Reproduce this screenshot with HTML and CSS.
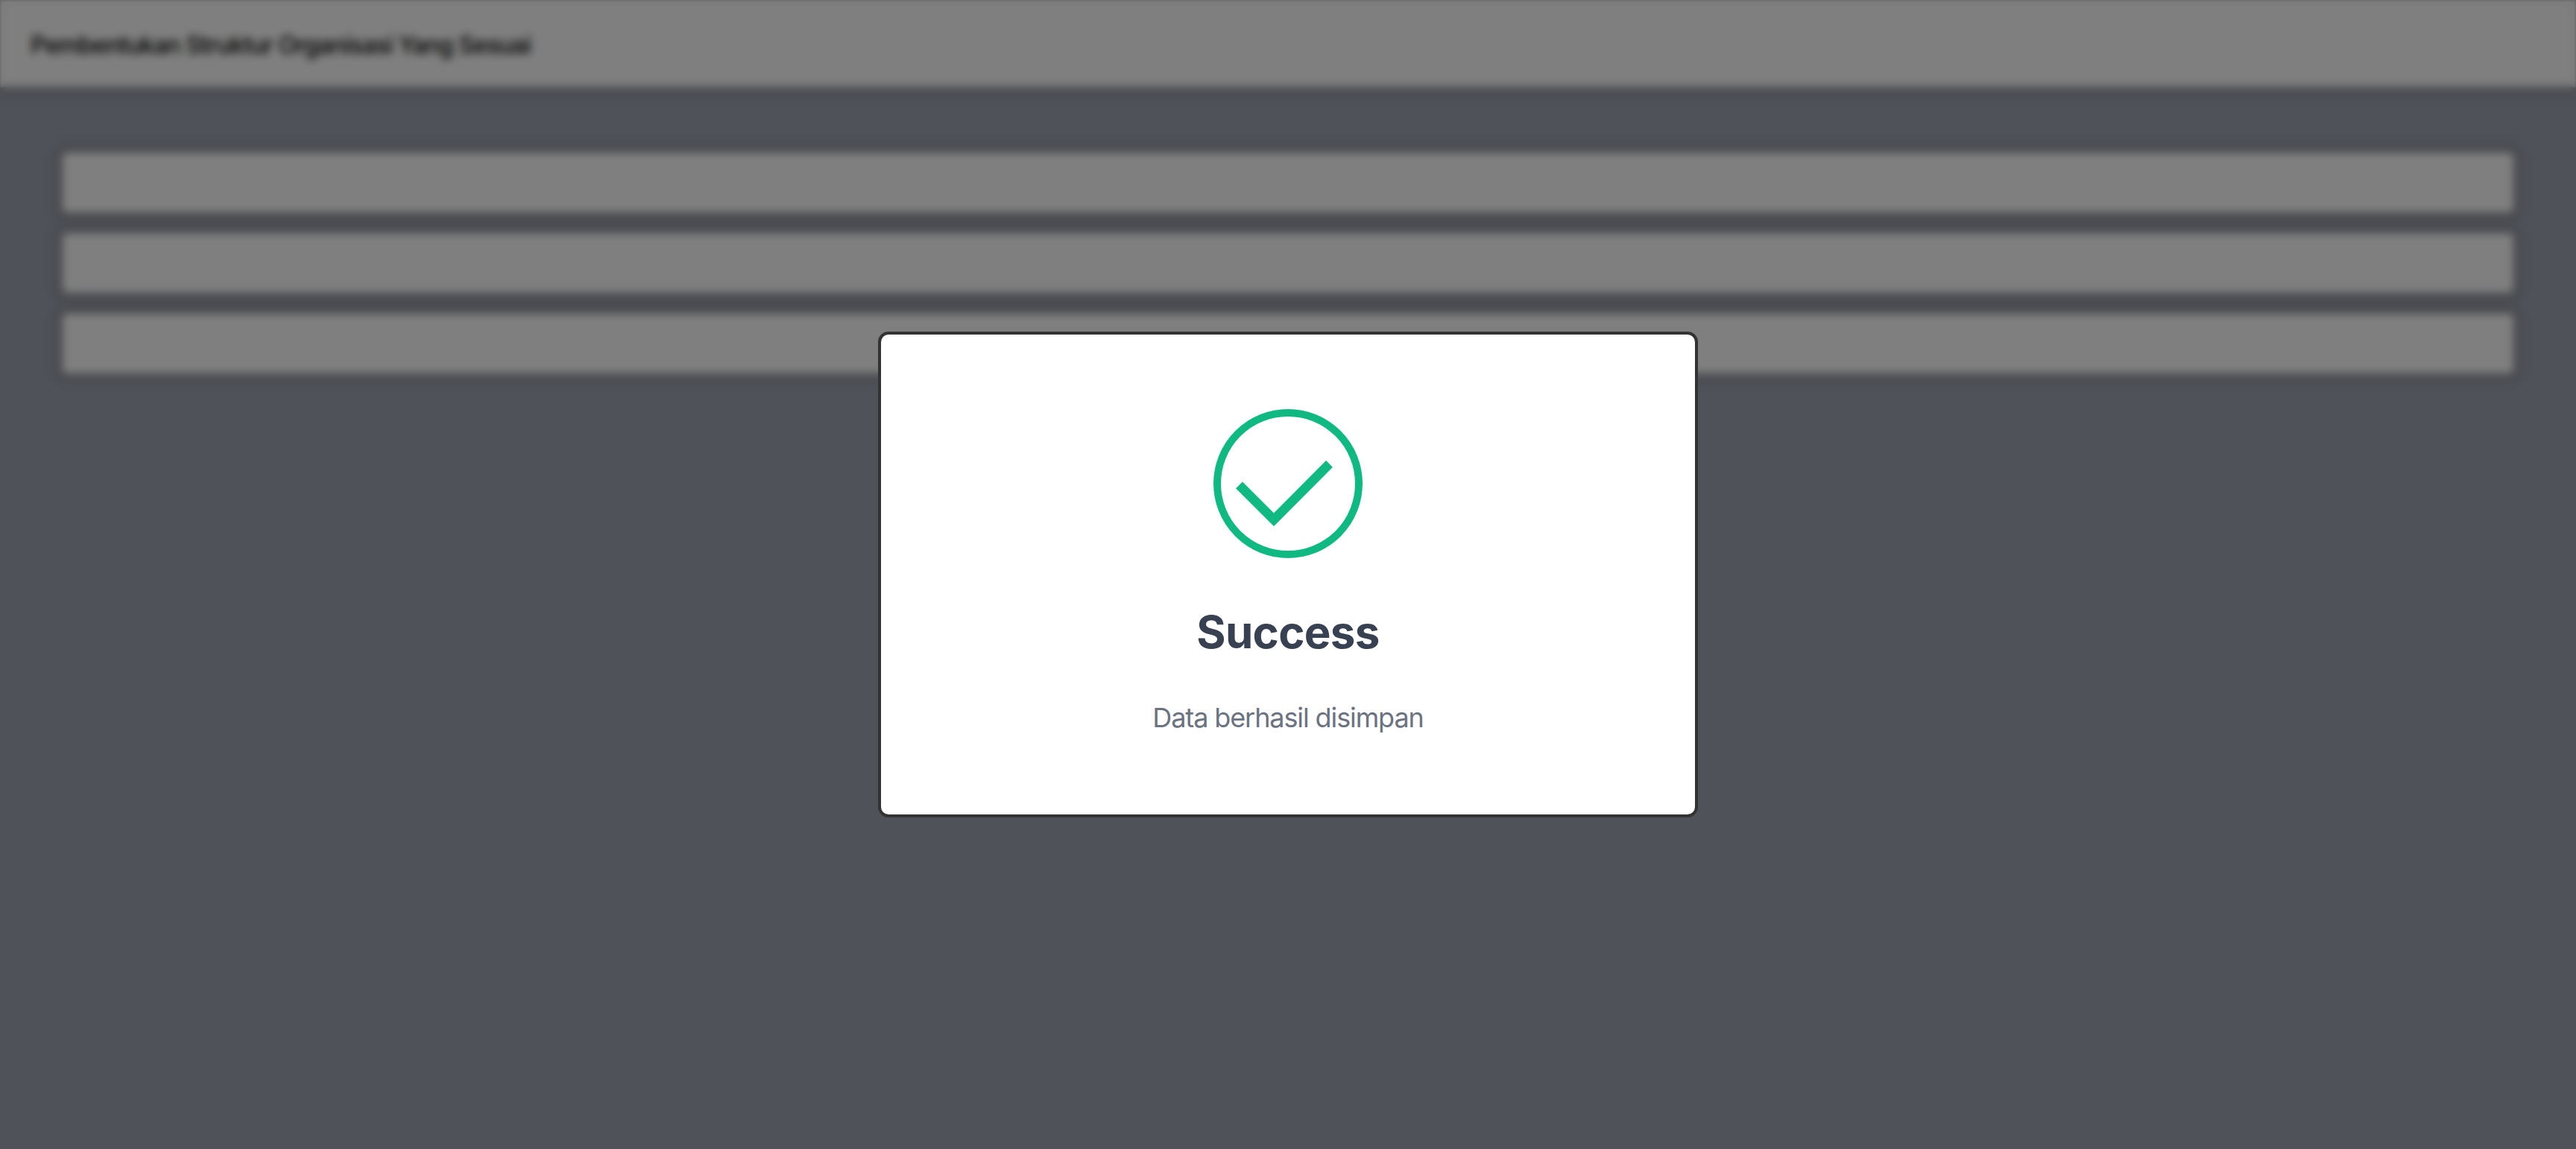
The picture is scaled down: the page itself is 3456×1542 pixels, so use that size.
FILE: index.html
```html
<!DOCTYPE html>
<html lang="id">
<head>
<meta charset="utf-8">
<title>Success</title>
<link rel="stylesheet" href="styles.css">
</head>
<body>
<div class="page">
  <header class="topbar"><span class="topbar-title">Pembentukan Struktur Organisasi Yang Sesuai</span></header>
  <main class="rows">
    <div class="row"></div>
    <div class="row"></div>
    <div class="row"></div>
  </main>
</div>
<div class="overlay">
  <div class="modal">
    <svg class="modal-icon" viewBox="0 0 200 200" aria-hidden="true">
      <circle class="icon-ring" cx="100" cy="100" r="95"/>
      <path class="icon-check" d="M34.5 102 L81 148.5 L155.5 73.5"/>
    </svg>
    <h2 class="modal-title">Success</h2>
    <p class="modal-text">Data berhasil disimpan</p>
  </div>
</div>
</body>
</html>
```

FILE: styles.css
```css
* { box-sizing: border-box; }
html, body { margin: 0; height: 100%; overflow: hidden; }
body { font-family: Inter, "Liberation Sans", sans-serif; background: #9ea4b2; }
.page { height: 1542px; display: flex; flex-direction: column; }
.topbar {
  height: 117px;
  background: #fff;
  border: 2px solid #cfd1d6;
  box-shadow: 0 2px 14px 8px rgba(70, 60, 30, .14);
  display: flex;
  align-items: center;
  padding: 3px 0 0 39px;
}
.topbar-title { font-size: 32px; letter-spacing: -.9px; font-weight: 500; color: #000; }
.rows { display: flex; flex-direction: column; gap: 28px; padding: 88px 84px 0; }
.row {
  height: 80px;
  background: #fff;
  border-radius: 6px;
  box-shadow: 0 0 12px 10px rgba(70, 60, 30, .16);
}
.overlay {
  position: fixed;
  inset: 0;
  background: rgba(0, 0, 0, .5);
  backdrop-filter: blur(6px);
  display: flex;
  justify-content: center;
  align-items: flex-start;
  padding-top: 445px;
}
.modal {
  width: 1100px;
  height: 652px;
  background: #fff;
  border: 4px solid #333;
  border-radius: 14px;
  display: flex;
  flex-direction: column;
  align-items: center;
  padding-top: 100px;
}
.modal-icon { width: 200px; height: 200px; display: block; flex: none; }
.icon-ring { fill: none; stroke: #10b981; stroke-width: 10; }
.icon-check { fill: none; stroke: #10b981; stroke-width: 12.5; }
.modal-title {
  margin: 63px 0 0;
  font-size: 60px;
  line-height: 72px;
  font-weight: 700;
  letter-spacing: -.7px;
  color: #374151;
}
.modal-text {
  margin: 55px 0 0;
  font-size: 36px;
  line-height: 48px;
  letter-spacing: -1.1px;
  color: #6b7280;
}
```
